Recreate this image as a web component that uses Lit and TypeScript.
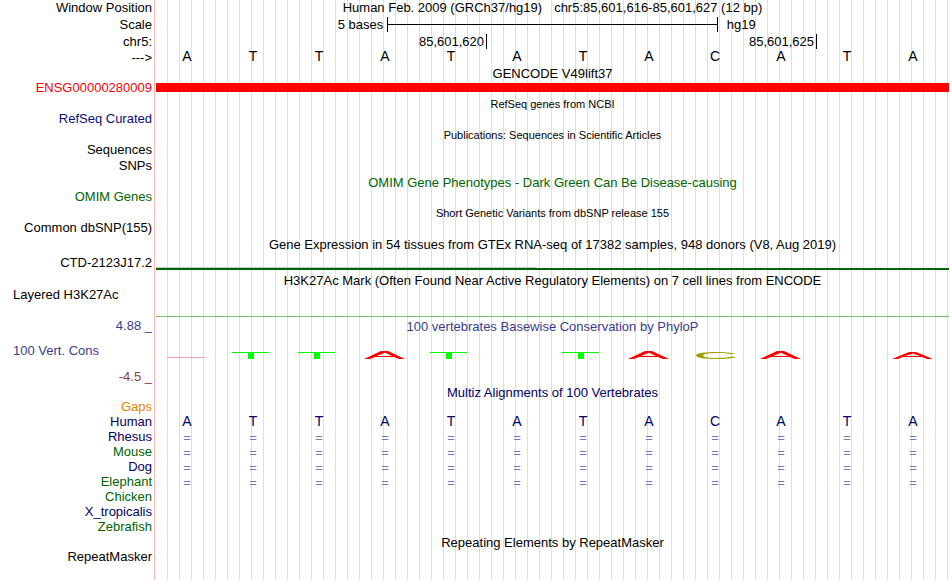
import { LitElement, TemplateResult, css, html, svg } from "lit";
import { customElement, property } from "lit/decorators.js";

const SEQUENCE = "ATTATATACATA".split("");

const glyphs: Record<string, TemplateResult> = {
  faint: svg`<path d="M13 6h38v1H13z" fill="#f5a0aa" />`,
  T: svg`<path d="M12 1h37v1H12zM28 1h6v7h-6z" fill="#00ff00" />`,
  A: svg`<path
    d="M12 8L29 0H36L53 8H47L42 6H23L18 8ZM25 5H40L33 1.8Z"
    fill="#ff0000"
    fill-rule="evenodd"
  />`,
  short: svg`<path
    d="M12 8L29 1H36L53 8H47L42 6H23L18 8ZM25 5H40L33 2.6Z"
    fill="#ff0000"
    fill-rule="evenodd"
  />`,
  C: svg`<path
    d="M53 2.8C47 .4 14 0 14 4.5S47 8.6 54 6.2L50 5.6C44 7.6 21 7.6 21 4.5S44 1.4 49 3.2Z"
    fill="#a0a000"
  />`,
};

const CONSERVATION = ["faint", "T", "T", "A", "T", "", "T", "A", "C", "A", "", "short"];

const SPECIES = [
  { name: "Rhesus", color: "navy", aligned: true },
  { name: "Mouse", color: "green", aligned: true },
  { name: "Dog", color: "navy", aligned: true },
  { name: "Elephant", color: "green", aligned: true },
  { name: "Chicken", color: "green", aligned: false },
  { name: "X_tropicalis", color: "navy", aligned: false },
];

@customElement("track-row")
export class TrackRow extends LitElement {
  @property()
  label = "";

  render() {
    return html`
      <div class="label">${this.label}</div>
      <div class="data"><slot></slot></div>
    `;
  }

  static styles = css`
    :host {
      display: flex;
      color: #000000;
      line-height: 15px;
    }

    :host([kind="title"]) {
      line-height: 14px;
    }

    :host([kind="item"]) {
      min-height: 17px;
    }

    :host([kind="last"]) {
      min-height: 16px;
    }

    :host([kind="ruler"]) {
      min-height: 16px;
      line-height: 16px;
    }

    :host([kind="scale"]) {
      min-height: 18px;
      line-height: 18px;
    }

    :host([kind="expression"]) {
      height: 22px;
      line-height: 24px;
    }

    :host([kind="signal"]) {
      min-height: 32px;
    }

    :host([kind="logo"]) {
      min-height: 36px;
      line-height: 36px;
    }

    :host([kind="fill"]) {
      flex: 1;
    }

    :host([color="red"]) {
      color: #ff0000;
    }

    :host([color="navy"]) {
      color: #000064;
    }

    :host([color="blue"]) {
      color: #0c0c78;
    }

    :host([color="green"]) {
      color: #006400;
    }

    :host([color="slate"]) {
      color: #3c3c8c;
    }

    :host([color="brown"]) {
      color: #8c3c3c;
    }

    :host([color="orange"]) {
      color: #e68200;
    }

    .label {
      box-sizing: border-box;
      flex: none;
      width: 155px;
      padding: 0 2px 0 13px;
      border-right: 1px solid #ffb4b4;
      text-align: right;
      white-space: nowrap;
    }

    :host([align="left"]) .label {
      text-align: left;
    }

    .data {
      display: flow-root;
      flex: 1;
      min-width: 0;
      margin-left: 1px;
      background: linear-gradient(to right, transparent 11px, #dcdcfa 11px) 0 0 / 12px 100%;
    }
  `;
}

@customElement("app-root")
export class AppRoot extends LitElement {
  private heading(text: string, style = "large") {
    return html`
      <track-row kind="title"><div class="title ${style}">${text}</div></track-row>
    `;
  }

  private bases(letters: string[], style = "") {
    return html`
      <div class="bases ${style}">${letters.map((letter) => html`<span>${letter}</span>`)}</div>
    `;
  }

  render() {
    return html`
      <track-row kind="ruler" label="Window Position">
        <div class="title position">
          <span>Human Feb. 2009 (GRCh37/hg19)</span>
          <span>chr5:85,601,616-85,601,627 (12 bp)</span>
        </div>
      </track-row>
      <track-row kind="scale" label="Scale">
        <div class="scale">
          <span class="length">5 bases</span>
          <span class="bracket"></span>
          <span class="assembly">hg19</span>
        </div>
      </track-row>
      <track-row kind="ruler" label="chr5:">
        <div class="ticks">
          <span>85,601,620</span>
          <span>85,601,625</span>
          <span></span>
        </div>
      </track-row>
      <track-row kind="ruler" label="--->">${this.bases(SEQUENCE, "reference")}</track-row>

      ${this.heading("GENCODE V49lift37")}
      <track-row kind="item" color="red" label="ENSG00000280009">
        <div class="gene"></div>
      </track-row>
      ${this.heading("RefSeq genes from NCBI", "small")}
      <track-row kind="item" color="blue" label="RefSeq Curated"></track-row>
      ${this.heading("Publications: Sequences in Scientific Articles", "small")}
      <track-row kind="last" label="Sequences"></track-row>
      <track-row kind="item" label="SNPs"></track-row>
      ${this.heading("OMIM Gene Phenotypes - Dark Green Can Be Disease-causing", "large green")}
      <track-row kind="item" color="green" label="OMIM Genes"></track-row>
      ${this.heading("Short Genetic Variants from dbSNP release 155", "small")}
      <track-row kind="item" label="Common dbSNP(155)"></track-row>
      ${this.heading(
        "Gene Expression in 54 tissues from GTEx RNA-seq of 17382 samples, 948 donors (V8, Aug 2019)"
      )}
      <track-row kind="expression" label="CTD-2123J17.2">
        <div class="expression"></div>
      </track-row>
      ${this.heading(
        "H3K27Ac Mark (Often Found Near Active Regulatory Elements) on 7 cell lines from ENCODE"
      )}
      <track-row kind="signal" align="left" label="Layered H3K27Ac">
        <div class="signal"></div>
      </track-row>

      <track-row kind="title" color="slate" label="4.88 _">
        <div class="title large">100 vertebrates Basewise Conservation by PhyloP</div>
      </track-row>
      <track-row kind="logo" align="left" color="slate" label="100 Vert. Cons">
        <div class="bases logo">
          ${CONSERVATION.map(
            (name) => html`<svg width="66" height="8" aria-hidden="true">${glyphs[name]}</svg>`
          )}
        </div>
      </track-row>
      <track-row kind="ruler" color="brown" label="-4.5 _"></track-row>

      ${this.heading("Multiz Alignments of 100 Vertebrates", "large navy")}
      <track-row color="orange" label="Gaps"></track-row>
      <track-row color="navy" label="Human">${this.bases(SEQUENCE, "human")}</track-row>
      ${SPECIES.map(
        ({ name, color, aligned }) => html`
          <track-row color=${color} label=${name}>
            ${aligned ? this.bases(SEQUENCE.map(() => "="), "match") : ""}
          </track-row>
        `
      )}
      <track-row kind="last" color="green" label="Zebrafish"></track-row>
      ${this.heading("Repeating Elements by RepeatMasker")}
      <track-row kind="fill" label="RepeatMasker"></track-row>
    `;
  }

  static styles = css`
    :host {
      display: flex;
      flex-direction: column;
      box-sizing: border-box;
      min-height: 100vh;
      padding-right: 1px;
      background: #ffffff;
      font-family: "Liberation Sans", Arial, sans-serif;
      font-size: 13px;
    }

    .title {
      text-align: center;
      white-space: nowrap;
    }

    .large {
      height: 14px;
      line-height: 16px;
    }

    .small {
      font-size: 11px;
    }

    .green {
      color: #006400;
    }

    .navy {
      color: #000064;
    }

    .position {
      display: flex;
      justify-content: center;
      gap: 12px;
      line-height: 15px;
    }

    .scale {
      display: grid;
      grid-template-columns: 7fr 10fr 7fr;
    }

    .length {
      padding-right: 4px;
      text-align: right;
    }

    .assembly {
      padding-left: 9px;
    }

    .bracket {
      height: 15px;
      margin-top: 1px;
      border: solid #000000;
      border-width: 0 1px;
      background: linear-gradient(#000000, #000000) 0 7px / 100% 1px no-repeat;
    }

    .ticks {
      display: grid;
      grid-template-columns: 5fr 5fr 2fr;
      margin-right: 1px;
      line-height: 16px;
      text-align: right;
    }

    .ticks span {
      height: 15px;
      padding-right: 2px;
    }

    .ticks span + span {
      border-left: 1px solid #000000;
    }

    .bases {
      display: grid;
      grid-template-columns: repeat(12, 1fr);
      margin: 0 3px 0 -2px;
      text-align: center;
    }

    .reference,
    .human {
      font-size: 14px;
    }

    .reference {
      line-height: 13px;
    }

    .match {
      height: 15px;
      color: #7878b4;
      line-height: 17px;
    }

    .logo {
      padding-top: 18px;
    }

    .logo svg {
      display: block;
    }

    .gene {
      height: 9px;
      margin-top: 3px;
      background: #ff0000;
    }

    .expression {
      height: 3px;
      margin-top: 16px;
      background:
        linear-gradient(#006400, #006400) 0 1px / 100% 2px no-repeat,
        linear-gradient(#c8c8c8, #c8c8c8) 0 0 / 48% 1px no-repeat;
    }

    .signal {
      height: 1px;
      margin-top: 29px;
      background: #6ebe64;
    }
  `;
}
